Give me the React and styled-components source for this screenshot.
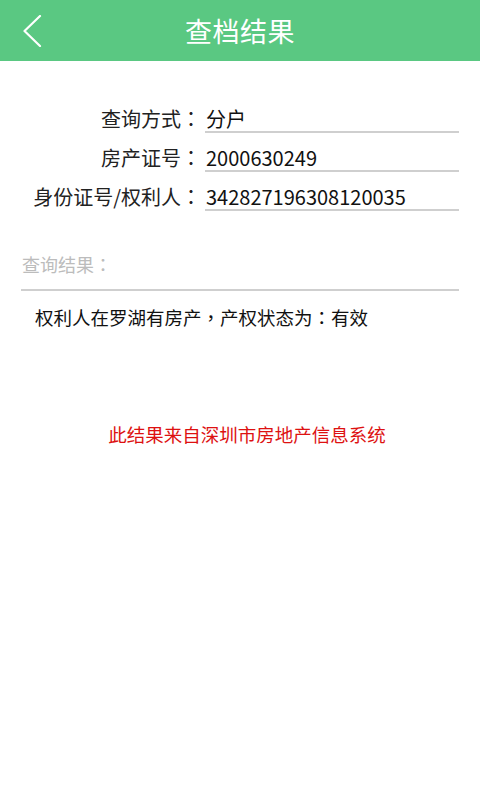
import styled, { createGlobalStyle } from 'styled-components';

const GlobalStyle = createGlobalStyle`
  body {
    margin: 0;
    background: #ffffff;
    font-family: 'Noto Sans CJK SC', 'Noto Sans', sans-serif;
  }
`;

const fields = [
  { label: '查询方式', value: '分户' },
  { label: '房产证号', value: '2000630249' },
  { label: '身份证号/权利人', value: '342827196308120035' },
];

export default function App() {
  return (
    <Page>
      <GlobalStyle />
      <Header>
        <BackButton type="button" aria-label="返回">
          <svg width="20" height="32" viewBox="0 0 20 32">
            <path
              d="M18 1 L2.5 16 L18 31"
              fill="none"
              stroke="#ffffff"
              strokeWidth="2.2"
              strokeLinecap="round"
              strokeLinejoin="round"
            />
          </svg>
        </BackButton>
        <Title>查档结果</Title>
      </Header>

      <Form>
        {fields.map((field) => (
          <Row key={field.label}>
            <Label>
              {field.label}
              <Punct>：</Punct>
            </Label>
            <Value>{field.value}</Value>
          </Row>
        ))}
      </Form>

      <Result>
        <ResultTitle>
          查询结果<Punct>：</Punct>
        </ResultTitle>
        <ResultText>
          权利人在罗湖有房产<Punct>，</Punct>产权状态为<Punct>：</Punct>有效
        </ResultText>
      </Result>

      <Source>此结果来自深圳市房地产信息系统</Source>
    </Page>
  );
}

const Page = styled.div`
  width: 480px;
  min-height: 800px;
  background: #ffffff;
`;

const Header = styled.header`
  position: relative;
  display: flex;
  align-items: center;
  justify-content: center;
  height: 61px;
  background: #5ac882;
`;

const BackButton = styled.button`
  position: absolute;
  left: 22px;
  top: 15px;
  padding: 0;
  border: none;
  background: none;
  display: flex;
`;

const Title = styled.h1`
  margin: 0;
  color: #ffffff;
  font-size: 27px;
  font-weight: 400;
  letter-spacing: 0.5px;
`;

// centred full-width punctuation, as on the device font
const Punct = styled.span`
  font-family: 'Noto Sans CJK TC', 'Noto Sans CJK SC', sans-serif;
`;

const Form = styled.div`
  display: flex;
  flex-direction: column;
  gap: 13px;
  padding: 46px 21px 0 21px;
`;

const Row = styled.div`
  display: grid;
  grid-template-columns: 180px 254px;
  column-gap: 4px;
`;

const Label = styled.span`
  text-align: right;
  font-size: 20px;
  line-height: 24px;
  color: #222222;
  white-space: nowrap;
`;

const Value = styled.span`
  font-size: 20px;
  line-height: 24px;
  color: #111111;
  border-bottom: 2px solid #cfcfcf;
  padding-left: 1px;
`;

const Result = styled.section`
  margin: 0 21px;
  padding-top: 41px;
`;

const ResultTitle = styled.div`
  font-size: 18px;
  line-height: 24px;
  color: #bcbcbc;
  padding: 0 1px 13px;
  border-bottom: 2px solid #cfcfcf;
`;

const ResultText = styled.p`
  margin: 0;
  padding: 14px 0 0 14px;
  font-size: 18.5px;
  line-height: 24px;
  color: #111111;
`;

const Source = styled.p`
  margin: 93px 0 0;
  padding-left: 14px;
  text-align: center;
  font-size: 18.5px;
  line-height: 24px;
  color: #dd1111;
`;
